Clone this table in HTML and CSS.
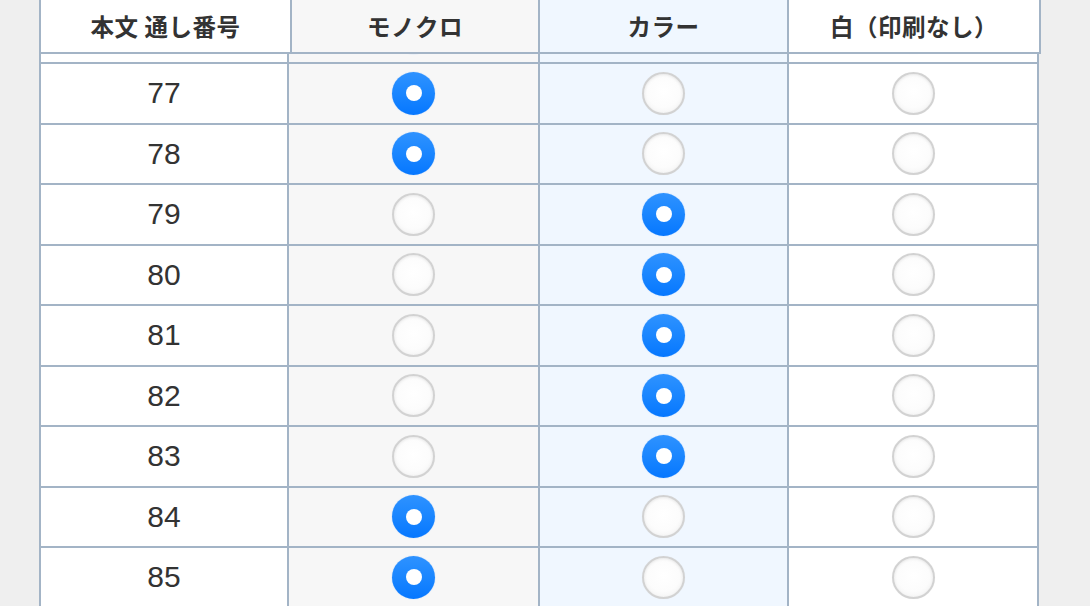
FILE: index.html
```html
<!DOCTYPE html>
<html lang="ja">
<head>
<meta charset="utf-8">
<title>印刷設定</title>
<link rel="stylesheet" href="styles.css">
</head>
<body>
<div class="page">
  <div class="table">
    <div class="thead">
      <div class="th c1">本文 通し番号</div>
      <div class="th c2 gray">モノクロ</div>
      <div class="th c3 blue">カラー</div>
      <div class="th c4">白（印刷なし）</div>
    </div>
    <div class="tbody">
      <div class="tr"><div class="td c1"></div><div class="td c2 gray"><span class="radio on"></span></div><div class="td c3 blue"><span class="radio"></span></div><div class="td c4"><span class="radio"></span></div></div>
      <div class="tr"><div class="td c1">77</div><div class="td c2 gray"><span class="radio on"></span></div><div class="td c3 blue"><span class="radio"></span></div><div class="td c4"><span class="radio"></span></div></div>
      <div class="tr"><div class="td c1">78</div><div class="td c2 gray"><span class="radio on"></span></div><div class="td c3 blue"><span class="radio"></span></div><div class="td c4"><span class="radio"></span></div></div>
      <div class="tr"><div class="td c1">79</div><div class="td c2 gray"><span class="radio"></span></div><div class="td c3 blue"><span class="radio on"></span></div><div class="td c4"><span class="radio"></span></div></div>
      <div class="tr"><div class="td c1">80</div><div class="td c2 gray"><span class="radio"></span></div><div class="td c3 blue"><span class="radio on"></span></div><div class="td c4"><span class="radio"></span></div></div>
      <div class="tr"><div class="td c1">81</div><div class="td c2 gray"><span class="radio"></span></div><div class="td c3 blue"><span class="radio on"></span></div><div class="td c4"><span class="radio"></span></div></div>
      <div class="tr"><div class="td c1">82</div><div class="td c2 gray"><span class="radio"></span></div><div class="td c3 blue"><span class="radio on"></span></div><div class="td c4"><span class="radio"></span></div></div>
      <div class="tr"><div class="td c1">83</div><div class="td c2 gray"><span class="radio"></span></div><div class="td c3 blue"><span class="radio on"></span></div><div class="td c4"><span class="radio"></span></div></div>
      <div class="tr"><div class="td c1">84</div><div class="td c2 gray"><span class="radio on"></span></div><div class="td c3 blue"><span class="radio"></span></div><div class="td c4"><span class="radio"></span></div></div>
      <div class="tr"><div class="td c1">85</div><div class="td c2 gray"><span class="radio on"></span></div><div class="td c3 blue"><span class="radio"></span></div><div class="td c4"><span class="radio"></span></div></div>
    </div>
  </div>
</div>
</body>
</html>
```
FILE: styles.css
```css
html, body {
  margin: 0;
  padding: 0;
  height: 100%;
  overflow: hidden;
  background: #efefef;
}

.page {
  padding-left: 39px;
  font-family: "Liberation Sans", "Noto Sans CJK JP", sans-serif;
  color: #333;
}

.table {
  width: 1002px;
}

.thead {
  position: relative;
  z-index: 2;
  display: flex;
  width: 1000px;
  height: 52px;
  border-left: 2px solid #a3b4c6;
  border-bottom: 2px solid #a3b4c6;
}

.th {
  display: flex;
  align-items: center;
  justify-content: center;
  border-right: 2px solid #a3b4c6;
  background: #fff;
  font-family: "Noto Sans CJK JP", sans-serif;
  font-weight: 700;
  font-size: 23.5px;
  color: #333;
  letter-spacing: 0.5px;
  white-space: pre;
}

.thead .c1 { width: 249px; }
.thead .c2 { width: 246px; }
.thead .c3 { width: 247px; }
.thead .c4 { width: 250px; }

.tbody {
  position: relative;
  z-index: 1;
  margin-top: -50.5px;
  width: 998px;
  border-left: 2px solid #a3b4c6;
}

.tr {
  display: flex;
  height: 58.5px;
  border-bottom: 2px solid #a3b4c6;
}

.td {
  display: flex;
  align-items: center;
  justify-content: center;
  border-right: 2px solid #a3b4c6;
  background: #fff;
  font-size: 30px;
  color: #333;
}

.tbody .c1 { width: 246px; }
.tbody .c2 { width: 249px; }
.tbody .c3 { width: 247px; }
.tbody .c4 { width: 248px; }

.gray { background: #f7f7f7; }
.blue { background: #f0f7ff; }
.th.gray { background: #f7f7f7; }
.th.blue { background: #f0f7ff; }

.radio {
  position: relative;
  display: block;
  width: 43px;
  height: 43px;
  box-sizing: border-box;
  border-radius: 50%;
  border: 2px solid #d2d2d2;
  background: radial-gradient(circle at 50% 45%, #ffffff 0%, #fcfcfc 55%, #eeeeee 100%);
  box-shadow: inset 0 1px 3px rgba(0, 0, 0, 0.08), 0 0 1px rgba(0, 0, 0, 0.08);
}

.radio.on {
  border: none;
  background: linear-gradient(180deg, #2e92ff 0%, #1a86ff 50%, #0677ff 100%);
  box-shadow: 0 0 1px rgba(0, 119, 255, 0.5);
}

.radio.on::after {
  content: "";
  position: absolute;
  left: 50%;
  top: 50%;
  width: 16px;
  height: 16px;
  margin: -8px 0 0 -8px;
  border-radius: 50%;
  background: #fff;
}
```
